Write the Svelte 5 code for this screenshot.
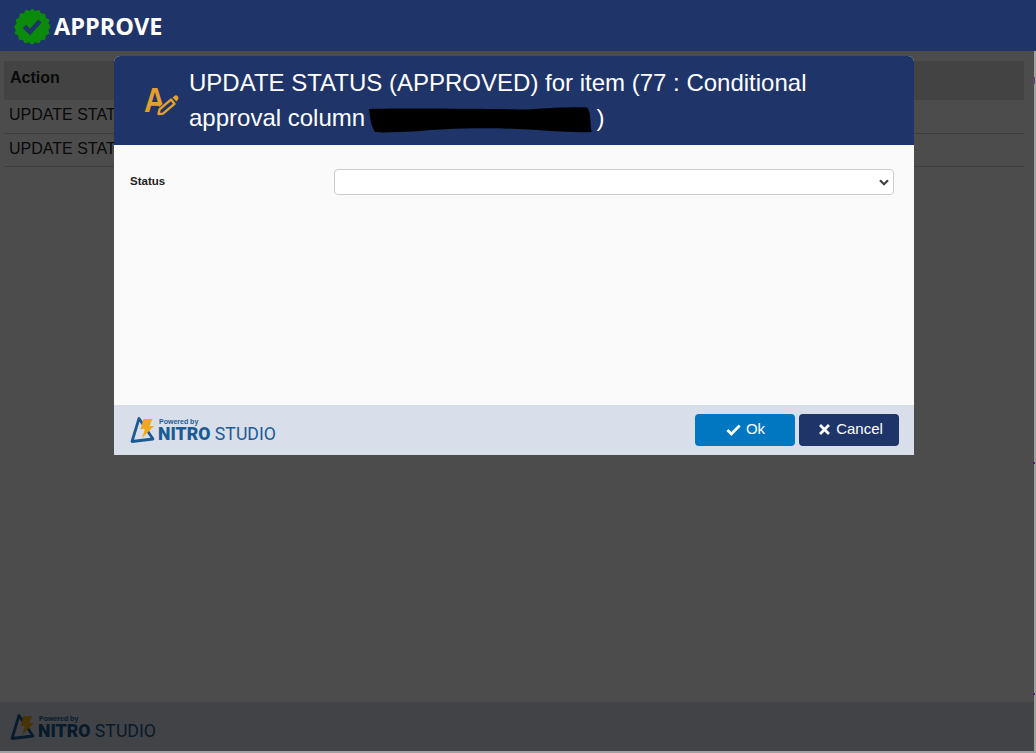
<script>
  const rows = ["UPDATE STATUS", "UPDATE STATUS"];
</script>

<div class="page">
  <header class="topbar">
    <svg class="badge" viewBox="0 0 36 36" width="36" height="36">
      <path fill="#0b8a0b" d="M18 0.5l3.2 2.6 3.900-1.300 2 3.600 4.100 0.300 0.500 4.100 3.700 1.800-1.100 4 2.700 3.100-2.700 3.100 1.100 4-3.700 1.800-0.500 4.100-4.100 0.300-2 3.600-3.900-1.300-3.200 2.600-3.200-2.600-3.900 1.300-2-3.600-4.100-0.300-0.500-4.100-3.700-1.800 1.100-4L0 18.500l2.700-3.100-1.100-4 3.700-1.800 0.500-4.100 4.100-0.300 2-3.600 3.900 1.300z" />
      <path fill="none" stroke="#1f3469" stroke-width="4.600" d="M10.500 18.500l5.500 5.500 10-11" />
    </svg>
    <h1>APPROVE</h1>
  </header>

  <main class="content">
    <table>
      <thead>
        <tr><th>Action</th></tr>
      </thead>
      <tbody>
        {#each rows as row}
          <tr><td>{row}</td></tr>
        {/each}
      </tbody>
    </table>
  </main>

  <footer class="pagefoot">
    <div class="nitro">
      <svg viewBox="0 0 26 28" width="26" height="28">
        <path fill="none" stroke="#1c5a94" stroke-width="2.800" stroke-linejoin="round" d="M9 2.500L2 25.500l21-2.500z" />
        <path fill="#f2a81d" d="M13.500 3h9l-3 7h4.500L12 22l3-9h-4.500z" />
      </svg>
      <div class="nitro-text">
        <span class="powered">Powered by</span>
        <span class="brand"><b>NITRO</b> STUDIO</span>
      </div>
    </div>
  </footer>

  <div class="backdrop"></div>
  <i class="mark mark-a"></i>
  <i class="mark mark-b"></i>
  <i class="mark mark-c"></i>

  <section class="modal">
    <div class="modal-head">
      <svg class="edit" viewBox="0 0 36 30" width="36" height="30">
        <text class="edit-a" x="0" y="25.500" textLength="21.500" lengthAdjust="spacingAndGlyphs">A</text>
        <path fill="#1f3469" d="M13 30l1-8 13-11 6 7-13 12z" />
        <path fill="#1f3469" stroke="#e5a127" stroke-width="2.400" stroke-linejoin="round" d="M14.500 28l1-4.600 11.500-9.800 3.500 4.200-11.500 9.800z" />
        <path fill="#e5a127" d="M28.500 11.500l2.500-2q1.500-.6 3 .9 1 1.500 0 3l-1.500 2z" />
      </svg>
      <h2>
        UPDATE STATUS (APPROVED) for item (77 : Conditional approval column
        <span class="redact">
          <svg viewBox="0 0 224 26" width="224" height="26">
            <path fill="#000" d="M1 2C40 1 130 2 160 2.500 180 1 205 0 219 0.500 223 4 222 15 223.500 25 200 26 175 23 150 22 110 20 70 22 45 24.500 30 25 15 26 7 25 3 19 2 10 1 2z" />
          </svg>
        </span>
        )
      </h2>
    </div>

    <div class="modal-body">
      <label for="status">Status</label>
      <div class="select-wrap">
        <select id="status">
          <option></option>
        </select>
        <svg class="chevron" viewBox="0 0 10 7" width="10" height="7">
          <path fill="none" stroke="#444" stroke-width="2.200" d="M1 1.200l4 4 4-4" />
        </svg>
      </div>
    </div>

    <div class="modal-foot">
      <div class="nitro">
        <svg viewBox="0 0 26 28" width="26" height="28">
          <path fill="none" stroke="#1c5a94" stroke-width="2.800" stroke-linejoin="round" d="M9 2.500L2 25.500l21-2.500z" />
          <path fill="#f2a81d" d="M13.500 3h9l-3 7h4.500L12 22l3-9h-4.500z" />
        </svg>
        <div class="nitro-text">
          <span class="powered">Powered by</span>
          <span class="brand"><b>NITRO</b> STUDIO</span>
        </div>
      </div>
      <div class="buttons">
        <button class="ok">
          <svg viewBox="0 0 16 16" width="15" height="15">
            <path fill="none" stroke="#fff" stroke-width="3" d="M1.500 8.500l4.200 4.200 8.800-9" />
          </svg>
          <span>Ok</span>
        </button>
        <button class="cancel">
          <svg viewBox="0 0 16 16" width="13" height="13">
            <path fill="none" stroke="#fff" stroke-width="3.400" d="M2.500 2.500l11 11M13.500 2.500l-11 11" />
          </svg>
          <span>Cancel</span>
        </button>
      </div>
    </div>
  </section>
</div>

<style>
  :global(body) {
    margin: 0;
    background: #a0a0a0;
    font-family: "Liberation Sans", Arial, sans-serif;
    overflow: hidden;
  }

  .page {
    position: relative;
    height: 753px;
    display: flex;
    flex-direction: column;
  }

  .topbar {
    height: 51px;
    flex: none;
    background: #1f3469;
    display: flex;
    align-items: center;
    padding-left: 14px;
    gap: 4px;
    position: relative;
    z-index: 2;
  }
  .topbar h1 {
    margin: 0;
    color: #fff;
    font: 700 23.500px "Open Sans", sans-serif;
  }

  .content {
    flex: 1;
    margin-right: 2px;
    background: #fff;
    padding: 10px 10px 0 4px;
  }
  table {
    width: 100%;
    border-collapse: collapse;
    font-size: 16px;
    color: #222;
  }
  th {
    text-align: left;
    background: #e2e2e2;
    height: 39px;
    box-sizing: border-box;
    padding: 0 6px 6px;
    font-size: 16px;
  }
  td {
    height: 33px;
    box-sizing: border-box;
    padding: 0 5px 2px;
    border-bottom: 1px solid #ccc;
  }

  .pagefoot {
    height: 49px;
    flex: none;
    margin: 0 2px 2px 0;
    background: #d9dfea;
    display: flex;
    align-items: center;
    padding-left: 10px;
  }

  .nitro {
    display: flex;
    align-items: flex-end;
    gap: 2px;
  }
  .nitro-text {
    display: flex;
    flex-direction: column;
    color: #1c5a94;
    line-height: 1;
  }
  .powered {
    font-size: 7px;
    font-weight: 700;
    margin-bottom: -1px;
    margin-left: 1px;
  }
  .brand {
    font: 400 17.700px Roboto, sans-serif;
    white-space: nowrap;
  }
  .brand b {
    font-weight: 900;
  }

  .backdrop {
    position: absolute;
    inset: 0 2px 2px 0;
    background: rgba(0, 0, 0, 0.7);
    z-index: 1;
  }

  .mark {
    position: absolute;
    right: 1px;
    width: 2px;
    z-index: 2;
  }
  .mark-a {
    top: 77px;
    height: 7px;
    background: #5b4a6a;
  }
  .mark-b {
    top: 462px;
    height: 2px;
    background: #5a1a70;
  }
  .mark-c {
    top: 693px;
    height: 2px;
    background: #5a1a70;
  }

  .modal {
    position: absolute;
    left: 114px;
    top: 56px;
    width: 800px;
    height: 399px;
    border-radius: 6px 6px 0 0;
    overflow: hidden;
    background: #fafafa;
    display: flex;
    flex-direction: column;
    z-index: 3;
  }
  .modal-head {
    height: 89px;
    flex: none;
    background: #1f3469;
    display: flex;
    align-items: center;
    padding-left: 30px;
    gap: 9px;
    box-sizing: border-box;
  }
  .edit {
    flex: none;
  }
  .edit-a {
    font: 700 35px "Liberation Sans", sans-serif;
    fill: #e5a127;
  }
  .modal-head h2 {
    margin: -2px 0 0;
    width: 640px;
    color: #fff;
    font-weight: 400;
    font-size: 24px;
    line-height: 35px;
  }
  .redact {
    display: inline-block;
    width: 224px;
    height: 26px;
    margin: 0 -2px 0 -4px;
    vertical-align: -7px;
  }

  .modal-body {
    flex: 1;
    display: flex;
    align-items: flex-start;
    padding: 24px 20px 0 16px;
  }
  label {
    width: 204px;
    flex: none;
    font-size: 11.500px;
    font-weight: 700;
    color: #222;
    line-height: 24px;
  }
  .select-wrap {
    flex: 1;
    position: relative;
    display: flex;
  }
  select {
    flex: 1;
    height: 26px;
    background: #fff;
    border: 1px solid #ccc;
    border-radius: 4px;
    color: #333;
    appearance: none;
  }
  .chevron {
    position: absolute;
    right: 5px;
    top: 10px;
  }

  .modal-foot {
    height: 50px;
    flex: none;
    background: #d9dfea;
    display: flex;
    align-items: center;
    justify-content: space-between;
    padding: 0 15px 0 16px;
  }
  .buttons {
    display: flex;
    gap: 4px;
  }
  button {
    height: 32px;
    border: 0;
    padding: 0;
    border-radius: 4px;
    color: #fff;
    font: 400 15px "Liberation Sans", sans-serif;
    display: flex;
    align-items: center;
    justify-content: center;
    gap: 5px;
  }
  button svg {
    margin-top: -1px;
  }
  button span {
    margin-top: -3px;
  }
  .ok {
    width: 100px;
    padding-left: 1px;
    background: #0077c0;
  }
  .cancel {
    width: 100px;
    padding-left: 3px;
    background: #1f3469;
  }
</style>
